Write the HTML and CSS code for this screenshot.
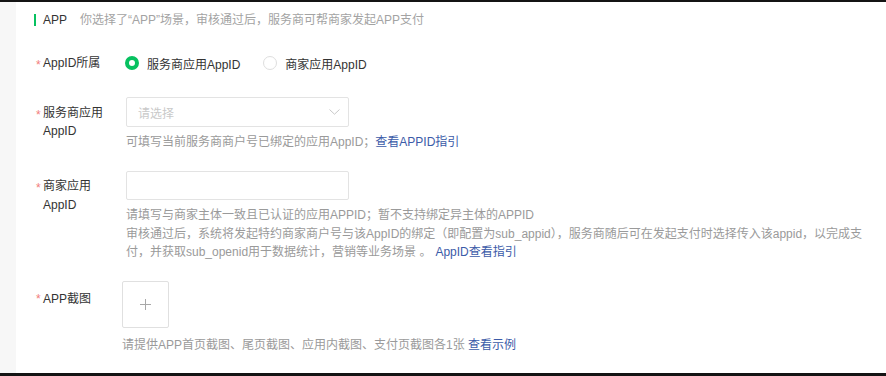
FILE: index.html
```html
<!DOCTYPE html>
<html lang="zh">
<head>
  <meta charset="UTF-8">
  <title>APP场景</title>
  <link rel="stylesheet" href="styles.css">
</head>
<body>
<div class="page">
  <div class="side"></div>
  <div class="main">
    <div class="scene_title">
      <span class="bar"></span>
      <span class="name">APP</span>
      <span class="desc">你选择了“APP”场景，审核通过后，服务商可帮商家发起APP支付</span>
    </div>

    <div class="form_row row_owner">
      <div class="label"><i>*</i>AppID所属</div>
      <div class="field">
        <label class="radio checked"><span class="dot"></span>服务商应用AppID</label>
        <label class="radio"><span class="dot"></span>商家应用AppID</label>
      </div>
    </div>

    <div class="form_row row_sp">
      <div class="label"><i>*</i>服务商应用<br>AppID</div>
      <div class="field">
        <div class="select">
          <span class="placeholder">请选择</span>
          <svg class="arrow" width="11" height="6" viewBox="0 0 11 6"><path d="M0.5 0.5 L5.5 5.2 L10.5 0.5" fill="none" stroke="#c8c8c8" stroke-width="1"/></svg>
        </div>
        <div class="help">可填写当前服务商商户号已绑定的应用AppID；<a href="#">查看APPID指引</a></div>
      </div>
    </div>

    <div class="form_row row_sub">
      <div class="label"><i>*</i>商家应用<br>AppID</div>
      <div class="field">
        <input class="text_input" type="text">
        <div class="help">
          请填写与商家主体一致且已认证的应用APPID；暂不支持绑定异主体的APPID<br>
          审核通过后，系统将发起特约商家商户号与该AppID的绑定（即配置为sub_appid），服务商随后可在发起支付时选择传入该appid，以完成支付，并获取sub_openid用于数据统计，营销等业务场景 。<a class="guide" href="#">AppID查看指引</a>
        </div>
      </div>
    </div>

    <div class="form_row row_shot">
      <div class="label"><i>*</i>APP截图</div>
      <div class="field shift">
        <div class="upload">
          <svg width="11" height="11" viewBox="0 0 11 11"><path d="M5.5 0 V11 M0 5.5 H11" stroke="#a8a8a8" stroke-width="1"/></svg>
        </div>
        <div class="help">请提供APP首页截图、尾页截图、应用内截图、支付页截图各1张 <a href="#">查看示例</a></div>
      </div>
    </div>
  </div>
</div>
</body>
</html>
```

FILE: styles.css
```css
html, body {
    margin: 0;
    padding: 0;
    background: #fff;
}
body {
    font-family: "Liberation Sans", "Noto Sans CJK SC", sans-serif;
    font-size: 12px;
    color: #333;
}
.page {
    display: flex;
    height: 376px;
    box-sizing: border-box;
    border-top: 2px solid #141414;
    border-bottom: 3px solid #141414;
    overflow: hidden;
}
.side {
    width: 16px;
    flex: none;
    background: #f7f7f7;
}
.main {
    flex: 1;
    padding: 11px 14px 0 20px;
}

/* 场景标题 */
.scene_title {
    display: flex;
    align-items: center;
    height: 14px;
    line-height: 14px;
}
.scene_title .bar {
    width: 2px;
    height: 12px;
    background: #07c160;
    margin-left: -2px;
    margin-right: 7px;
}
.scene_title .name {
    margin-right: 13px;
}
.scene_title .desc {
    color: #a3a3a3;
}

/* 表单行 */
.form_row {
    display: flex;
}
.form_row .label {
    width: 90px;
    flex: none;
    line-height: 18px;
    position: relative;
    padding-left: 7px;
    box-sizing: border-box;
}
.form_row .label i {
    position: absolute;
    left: 0;
    font-style: normal;
    color: #f27b7b;
}
.row_owner .label i {
    top: 2px;
}
.row_sp .label i,
.row_shot .label i {
    top: 9px;
}
.row_sub .label i {
    top: 8px;
}
.form_row .field {
    flex: 1;
}
.help {
    color: #9a9a9a;
    line-height: 18px;
    margin-top: 6px;
}
.help a {
    color: #3b5ba8;
    text-decoration: none;
}
.help a.guide {
    margin-left: 4px;
}

.row_owner {
    margin-top: 27px;
}
.row_owner .field {
    display: flex;
    align-items: center;
    height: 18px;
}
.radio {
    display: flex;
    align-items: center;
    margin-right: 24px;
}
.radio .dot {
    width: 14px;
    height: 14px;
    box-sizing: border-box;
    border-radius: 50%;
    border: 1px solid #dedede;
    margin-left: -1px;
    margin-right: 8px;
}
.radio.checked .dot {
    border: 4px solid #07c160;
}

.row_sp {
    margin-top: 25px;
}
.row_sp .label {
    padding-top: 7px;
}
.select {
    width: 223px;
    height: 30px;
    box-sizing: border-box;
    border: 1px solid #e3e3e3;
    border-radius: 2px;
    display: flex;
    align-items: center;
    justify-content: space-between;
    padding: 0 8px 0 11px;
}
.select .placeholder {
    color: #c9c9c9;
}

.row_sub {
    margin-top: 20px;
}
.row_sub .label {
    line-height: 19px;
    padding-top: 6px;
}
.text_input {
    display: block;
    width: 223px;
    height: 29px;
    box-sizing: border-box;
    border: 1px solid #e3e3e3;
    border-radius: 2px;
    margin: 0;
    outline: none;
}
.row_sub .help {
    line-height: 18.5px;
}

.row_shot {
    margin-top: 19px;
}
.row_shot .label {
    padding-top: 9px;
}
.row_shot .help {
    margin-top: 8px;
}
.field.shift {
    margin-left: -4px;
}
.upload {
    width: 47px;
    height: 47px;
    box-sizing: border-box;
    border: 1px solid #e0e0e0;
    border-radius: 2px;
    display: flex;
    align-items: center;
    justify-content: center;
}
```
